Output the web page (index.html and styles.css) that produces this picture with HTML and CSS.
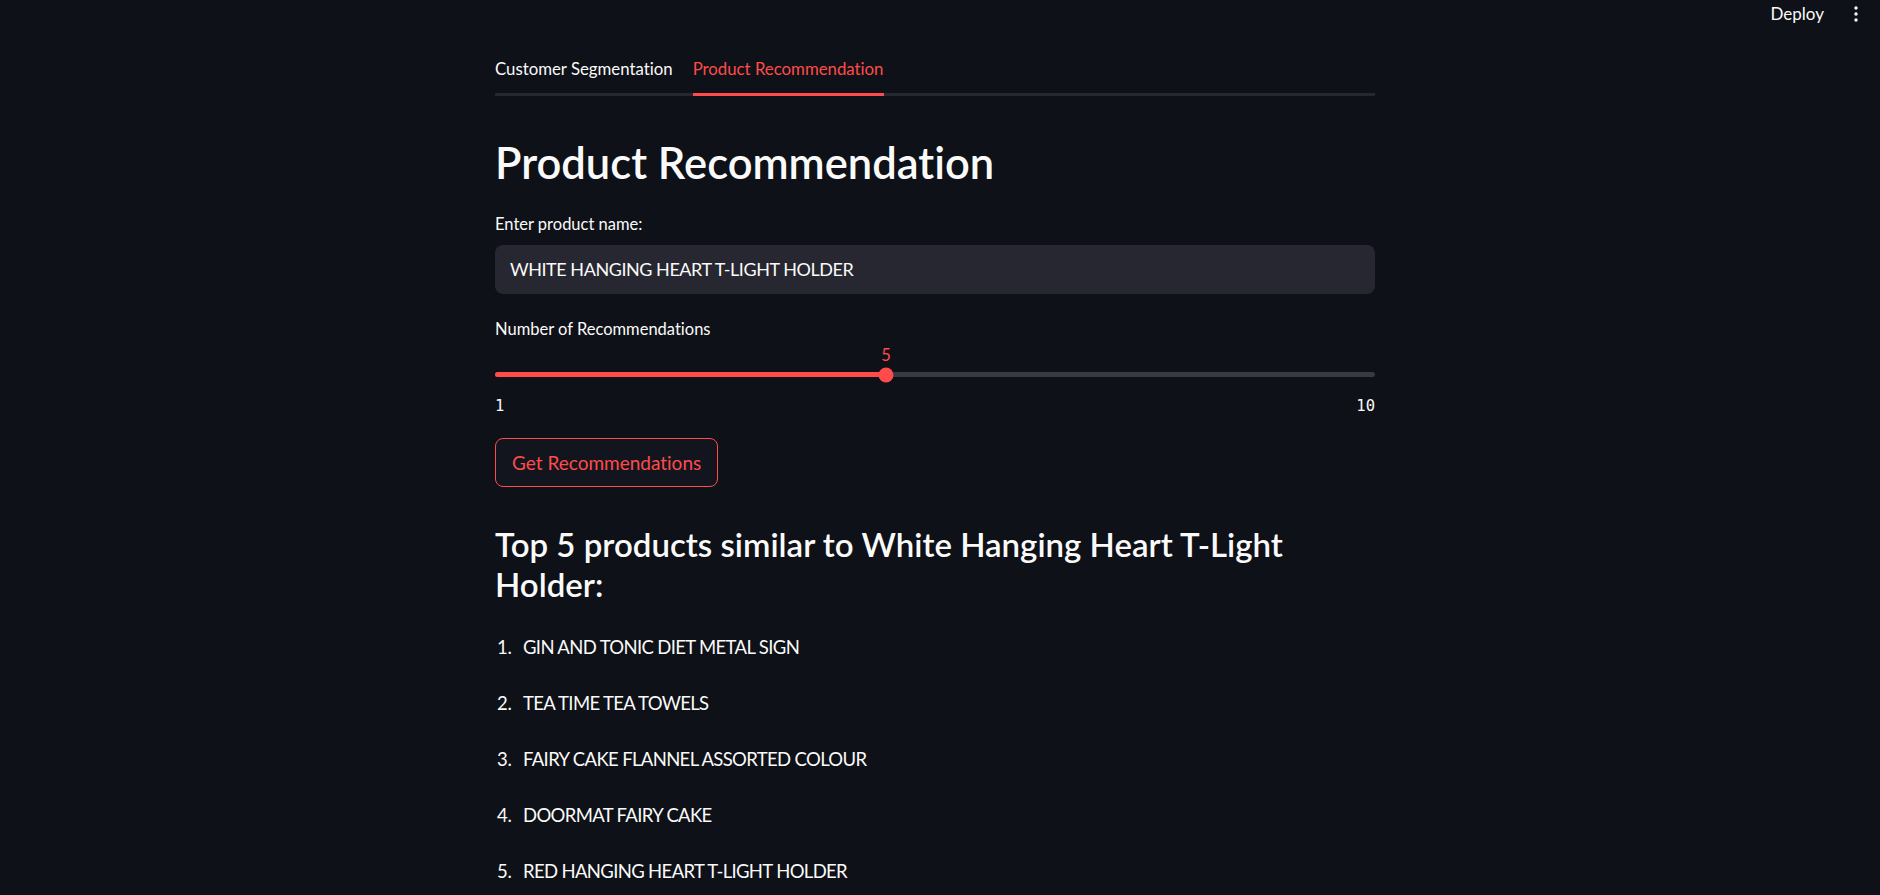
FILE: index.html
```html
<!DOCTYPE html>
<html lang="en">
<head>
<meta charset="utf-8">
<title>Product Recommendation</title>
<link rel="stylesheet" href="styles.css">
</head>
<body>
<header class="topbar">
  <span class="deploy">Deploy</span>
  <svg class="menu" width="20" height="20" viewBox="0 0 20 20" aria-hidden="true">
    <circle cx="10" cy="4" r="1.7" fill="#fafafa"/>
    <circle cx="10" cy="10" r="1.7" fill="#fafafa"/>
    <circle cx="10" cy="16" r="1.7" fill="#fafafa"/>
  </svg>
</header>
<div class="page">
  <main class="main">
    <nav class="tabs">
      <span class="tab">Customer Segmentation</span>
      <span class="tab active">Product Recommendation</span>
    </nav>

    <h1 class="title">Product Recommendation</h1>

    <label class="label label-input">Enter product name:</label>
    <div class="input">WHITE HANGING HEART T-LIGHT HOLDER</div>

    <label class="label label-slider">Number of Recommendations</label>
    <div class="slider">
      <div class="track">
        <div class="fill" style="width:44.44%"></div>
        <div class="thumb" style="left:44.44%"></div>
        <div class="thumb-value" style="left:44.44%">5</div>
      </div>
      <div class="ticks"><span>1</span><span>10</span></div>
    </div>

    <button class="btn">Get Recommendations</button>

    <h3 class="subtitle">Top 5 products similar to White Hanging Heart T-Light Holder:</h3>

    <ol class="list">
      <li><span class="num">1.</span><span class="item">GIN AND TONIC DIET METAL SIGN</span></li>
      <li><span class="num">2.</span><span class="item">TEA TIME TEA TOWELS</span></li>
      <li><span class="num">3.</span><span class="item">FAIRY CAKE FLANNEL ASSORTED COLOUR</span></li>
      <li><span class="num">4.</span><span class="item">DOORMAT FAIRY CAKE</span></li>
      <li><span class="num">5.</span><span class="item">RED HANGING HEART T-LIGHT HOLDER</span></li>
    </ol>
  </main>
</div>
</body>
</html>
```
FILE: styles.css
```css
html, body {
  margin: 0;
  padding: 0;
  background: #0e1117;
  color: #fafafa;
  font-family: Lato, "Noto Sans", sans-serif;
  font-variant-ligatures: none;
  overflow: hidden;
  height: 100%;
}

.topbar {
  display: flex;
  justify-content: flex-end;
  align-items: center;
  height: 28px;
  padding-right: 14px;
  gap: 22px;
}

.deploy {
  font-size: 17px;
  line-height: 28px;
  color: #fafafa;
}

.menu {
  display: block;
}

.page {
  padding-right: 10px;
}

.main {
  width: 880px;
  margin: 0 auto;
}

.tabs {
  display: flex;
  align-items: flex-start;
  gap: 20px;
  margin-top: 25px;
  border-bottom: 3px solid #262730;
}

.tab {
  font-size: 16.8px;
  line-height: 32px;
  padding-bottom: 8px;
  color: #fafafa;
}

.tab.active {
  color: #ff4b4b;
  border-bottom: 3px solid #ff4b4b;
  margin-bottom: -3px;
}

.title {
  margin: 42px 0 0;
  font-size: 43.5px;
  line-height: 48px;
  font-weight: 600;
}

.label {
  display: block;
  font-size: 16.5px;
  line-height: 22px;
}

.label-input {
  margin-top: 27px;
}

.input {
  margin-top: 10px;
  height: 49px;
  box-sizing: border-box;
  padding: 0 15px;
  background: #262730;
  border-radius: 8px;
  font-size: 18px;
  letter-spacing: -0.45px;
  line-height: 48px;
}

.label-slider {
  margin-top: 24px;
}

.slider {
  padding-top: 32px;
}

.track {
  position: relative;
  height: 5px;
  border-radius: 3px;
  background: #373943;
}

.fill {
  height: 100%;
  background: #ff4b4b;
  border-radius: 3px;
}

.thumb {
  position: absolute;
  top: 50%;
  width: 15px;
  height: 15px;
  border-radius: 50%;
  background: #ff4b4b;
  transform: translate(-50%, -50%);
}

.thumb-value {
  position: absolute;
  top: -27px;
  transform: translateX(-50%);
  font-family: Lato, "Noto Sans", sans-serif;
  font-size: 16.5px;
  line-height: 20px;
  color: #ff4b4b;
}

.ticks {
  display: flex;
  justify-content: space-between;
  margin-top: 19px;
  font-family: "DejaVu Sans Mono", monospace;
  font-size: 15.5px;
  line-height: 20px;
  color: #fafafa;
}

.btn {
  display: block;
  margin-top: 22px;
  height: 49px;
  padding: 0 16px;
  background: #12151d;
  border: 1px solid #ff4b4b;
  border-radius: 8px;
  color: #ff4b4b;
  font-family: Lato, "Noto Sans", sans-serif;
  font-variant-ligatures: none;
  font-size: 19px;
}

.subtitle {
  margin: 37px 0 0;
  font-size: 33px;
  line-height: 40px;
  font-weight: 600;
}

.list {
  list-style: none;
  margin: 27px 0 0;
  padding: 0;
}

.list li {
  display: flex;
  font-size: 18.5px;
  line-height: 32px;
  margin-bottom: 24px;
}

.item {
  letter-spacing: -0.65px;
}

.num {
  width: 28px;
  box-sizing: border-box;
  padding-right: 11px;
  text-align: right;
}
```
